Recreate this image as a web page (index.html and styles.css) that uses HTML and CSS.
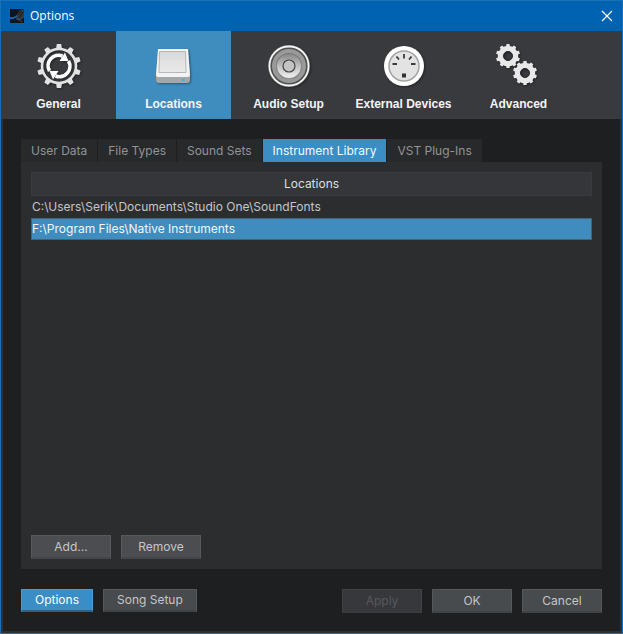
FILE: index.html
```
<!DOCTYPE html>
<html lang="en">
<head>
<meta charset="utf-8">
<title>Options</title>
<link rel="stylesheet" href="styles.css">
</head>
<body>
<div class="window">
  <header class="titlebar">
    <svg class="app-icon" viewBox="0 0 14 14" aria-hidden="true">
      <rect width="14" height="14" fill="#10151d"/>
      <path d="M5 8 10 1l4-1v9l-5 3z" fill="#343a42"/>
      <path d="M7 7l4-5M9 9l4-6" stroke="#11151b" stroke-width="1"/>
      <path d="M0 8q5 1 8-3-1 5-8 5z" fill="#1673cf"/>
      <path d="M6 10q4 0 6 3" stroke="#175ea5" fill="none"/>
    </svg>
    <h1 class="title">Options</h1>
    <button class="close" aria-label="Close">
      <svg viewBox="0 0 12 12" aria-hidden="true"><path d="M1 1l10 10M11 1L1 11" stroke="#fff" stroke-width="1.2"/></svg>
    </button>
  </header>

  <nav class="toolbar">
    <button class="tool">
      <svg class="tool-icon" viewBox="0 0 48 48" aria-hidden="true">
        <defs>
          <linearGradient id="metal" x2="0" y2="1"><stop stop-color="#d9d9d9"/><stop offset="1" stop-color="#eaeaea"/></linearGradient>
          <linearGradient id="cone" x2="0" y2="1"><stop stop-color="#858585"/><stop offset=".45" stop-color="#bbb"/><stop offset="1" stop-color="#f4f4f4"/></linearGradient>
          <path id="tooth" d="M-3 -17 -2.2 -22H2.2L3 -17z"/>
        </defs>
        <g transform="translate(24 24)" fill="#e2e2e2">
          <use href="#tooth"/><use href="#tooth" transform="rotate(36)"/><use href="#tooth" transform="rotate(72)"/><use href="#tooth" transform="rotate(108)"/><use href="#tooth" transform="rotate(144)"/><use href="#tooth" transform="rotate(180)"/><use href="#tooth" transform="rotate(216)"/><use href="#tooth" transform="rotate(252)"/><use href="#tooth" transform="rotate(288)"/><use href="#tooth" transform="rotate(324)"/>
          <circle r="17" fill="none" stroke="#e2e2e2" stroke-width="2.6"/>
          <g id="arrow">
            <path d="M-9.500 5A10.500 10.500 0 0 1 3.500 -10" fill="none" stroke="#fff" stroke-width="3.600"/>
            <path d="M6 -13.500 9.500 -5 .5 -5z" fill="#fff"/>
          </g>
          <use href="#arrow" transform="rotate(180)"/>
        </g>
      </svg>
      <span>General</span>
    </button>
    <button class="tool active">
      <svg class="tool-icon" viewBox="0 0 48 48" aria-hidden="true">
        <path d="M8 7h30l2 28v3q0 3-3 3h-28q-3 0-3-3v-3z" fill="#a5a6a7"/>
        <path d="M8 7h30l2 26q0 2-2 2h-30q-2 0-2-2z" fill="#f3f3f3"/>
        <path d="M9.500 9.500h26l.5 21h-27z" fill="url(#metal)" stroke="#b5b7b8"/>
        <rect x="32" y="37" width="2.500" height="2" fill="#22b8e8"/>
      </svg>
      <span>Locations</span>
    </button>
    <button class="tool">
      <svg class="tool-icon" viewBox="0 0 48 48" aria-hidden="true">
        <circle cx="24" cy="24" r="21" fill="#777"/>
        <circle cx="24" cy="24" r="19.500" fill="#505050" stroke="#f4f4f4" stroke-width="1.800"/>
        <circle cx="24" cy="24" r="15" fill="#777" stroke="#999" stroke-width="4"/>
        <circle cx="24" cy="24" r="12.500" fill="url(#cone)" stroke="#777" stroke-width=".6"/>
        <circle cx="24" cy="24" r="6" fill="#c4c4c4" stroke="#444" stroke-width="1.200"/>
      </svg>
      <span>Audio Setup</span>
    </button>
    <button class="tool">
      <svg class="tool-icon" viewBox="0 0 48 48" aria-hidden="true">
        <circle cx="24" cy="24" r="20" fill="#fff"/>
        <circle cx="24" cy="24" r="15" fill="#e3e3e3" stroke="#a3a3a3" stroke-width="1.500"/>
        <path d="M24 12v4.500M16.500 14.500l2.500 3M31.500 14.500l-2.500 3M12.500 22h4.500M31 22h4.500" stroke="#3a3a3a" stroke-width="1.800"/>
        <rect x="22" y="31.500" width="4" height="4" fill="#333"/>
      </svg>
      <span>External Devices</span>
    </button>
    <button class="tool">
      <svg class="tool-icon" viewBox="0 0 48 48" aria-hidden="true">
        <defs>
          <g id="gear" fill="#e8e8e8">
            <g id="teeth"><path id="cog" d="M-2 -9-1.500 -12h3L2 -9z"/><use href="#cog" transform="rotate(36)"/><use href="#cog" transform="rotate(72)"/><use href="#cog" transform="rotate(108)"/><use href="#cog" transform="rotate(144)"/></g>
            <use href="#teeth" transform="rotate(180)"/>
            <circle r="7.500" fill="none" stroke="#e8e8e8" stroke-width="5.500"/>
            <circle r="4.500" fill="none" stroke="#292b2e"/>
          </g>
        </defs>
        <use href="#gear" x="13" y="14"/>
        <use href="#gear" x="30" y="31"/>
      </svg>
      <span>Advanced</span>
    </button>
  </nav>

  <main class="content">
    <div class="tabs" role="tablist">
      <button class="tab" role="tab">User Data</button>
      <button class="tab" role="tab">File Types</button>
      <button class="tab" role="tab">Sound Sets</button>
      <button class="tab selected" role="tab" aria-selected="true">Instrument Library</button>
      <button class="tab" role="tab">VST Plug-Ins</button>
    </div>
    <section class="panel">
      <table class="locations">
        <thead><tr><th>Locations</th></tr></thead>
        <tbody>
          <tr><td>C:\Users\Serik\Documents\Studio One\SoundFonts</td></tr>
          <tr class="current"><td>F:\Program Files\Native Instruments</td></tr>
        </tbody>
      </table>
      <div class="actions">
        <button class="btn neutral">Add...</button>
        <button class="btn neutral">Remove</button>
      </div>
    </section>
    <footer class="footer">
      <button class="btn mode primary">Options</button>
      <button class="btn mode">Song Setup</button>
      <span class="spacer"></span>
      <button class="btn" disabled>Apply</button>
      <button class="btn">OK</button>
      <button class="btn">Cancel</button>
    </footer>
  </main>
</div>
</body>
</html>
```
FILE: styles.css
```
* { box-sizing: border-box; }

body {
  margin: 0;
  font: 12px/16px Inter, "Liberation Sans", sans-serif;
  color: #c4c6c8;
}

button {
  margin: 0;
  border: 0;
  padding: 0;
  font: inherit;
  color: inherit;
  background: none;
  white-space: nowrap;
}

.window {
  display: flex;
  flex-direction: column;
  min-height: 100vh;
  border: 1px solid #1a70b8;
  background: #1e1f21;
}

.titlebar {
  display: flex;
  align-items: center;
  gap: 6px;
  height: 30px;
  padding: 0 9px;
  background: #0063b1;
  color: #fff;
}

.app-icon { width: 14px; height: 14px; }

.title {
  flex: 1;
  margin: 0;
  font: 12px/16px "Open Sans", sans-serif;
}

.close { display: flex; }
.close svg { width: 12px; height: 12px; }

.toolbar {
  display: flex;
  background: #383a3e;
}

.tool {
  display: flex;
  flex: 0 1 115px;
  flex-direction: column;
  align-items: center;
  gap: 6px;
  height: 88px;
  padding-top: 11px;
  font: bold 12px/16px "Liberation Sans", Arial, sans-serif;
  color: #f4f4f4;
}

.tool.active { background: #3f8dbf; }

.tool-icon {
  width: 48px;
  height: 48px;
  filter: drop-shadow(1px 1px 1px rgba(0, 0, 0, 0.4));
}

.content {
  display: flex;
  flex: 1;
  flex-direction: column;
  padding: 20px 18px 18px;
  border: 2px solid #303134;
  border-top: 0;
}

.tabs { display: flex; gap: 1px; }

.tab {
  height: 23px;
  padding: 0 10px;
  background: #28292b;
  color: #929496;
}

.tab.selected { background: #3a8dc5; color: #f4f8fb; }

.panel {
  display: flex;
  flex: 1;
  flex-direction: column;
  justify-content: space-between;
  padding: 10px;
  background: #2c2d2f;
}

.locations {
  width: 100%;
  border-collapse: separate;
  border-spacing: 0;
}

.locations th {
  height: 24px;
  padding: 0;
  border: 1px solid #3a3b3f;
  background: #35363a;
  font-weight: normal;
  color: #dcdee0;
}

.locations td {
  height: 22px;
  padding: 0;
  border: 1px solid transparent;
}

.locations .current td {
  border-color: #42637a;
  background: #3f8dbf;
  color: #f2f6f9;
}

.actions, .footer { display: flex; gap: 10px; }
.footer { align-items: flex-start; padding-top: 20px; }
.spacer { flex: 1; }

.btn {
  width: 80px;
  height: 24px;
  border: 1px solid #55585b;
  border-bottom: 2px solid #404345;
  background: #484b4d;
}

.btn.neutral { background: #4c4d50; border-color: #58595c #58595c #444548; }
.btn.mode { width: auto; height: 23px; padding: 0 13px; }
.btn.primary { background: #3a8dc5; border-color: #4a9bd2 #4a9bd2 #2d6286; color: #fff; }
.btn:disabled { background: #37383b; border-color: #414245 #414245 #3a3b3e; color: #56585b; }
```
